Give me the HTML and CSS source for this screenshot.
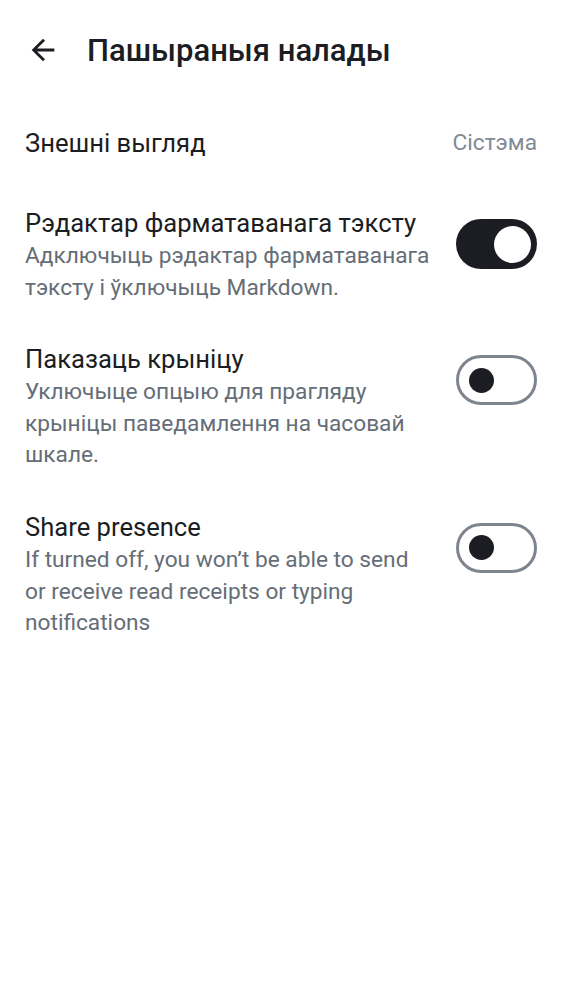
FILE: index.html
```html
<!DOCTYPE html>
<html lang="be">
<head>
<meta charset="utf-8">
<link rel="stylesheet" href="styles.css">
</head>
<body>
<div class="screen">
  <header class="topbar">
    <button class="back" aria-label="Back">
      <svg viewBox="0 0 24 24" width="34" height="34"><path d="M20 11H7.83l5.59-5.59L12 4l-8 8 8 8 1.41-1.41L7.83 13H20v-2z" fill="#1b1d22"/></svg>
    </button>
    <h1 class="title">Пашыраныя налады</h1>
  </header>
  <div class="row row-first">
    <div class="label">Знешні выгляд</div>
    <div class="value">Сістэма</div>
  </div>
  <div class="row">
    <div class="text">
      <div class="label">Рэдактар фарматаванага тэксту</div>
      <div class="desc">Адключыць рэдактар фарматаванага тэксту і ўключыць Markdown.</div>
    </div>
    <div class="switch on"><span class="thumb"></span></div>
  </div>
  <div class="row">
    <div class="text">
      <div class="label">Паказаць крыніцу</div>
      <div class="desc">Уключыце опцыю для прагляду крыніцы паведамлення на часовай шкале.</div>
    </div>
    <div class="switch"><span class="thumb"></span></div>
  </div>
  <div class="row">
    <div class="text">
      <div class="label">Share presence</div>
      <div class="desc">If turned off, you won’t be able to send or receive read receipts or typing notifications</div>
    </div>
    <div class="switch"><span class="thumb"></span></div>
  </div>
</div>
</body>
</html>
```
FILE: styles.css
```css
html, body {
  margin: 0;
  padding: 0;
  background: #ffffff;
}
body {
  font-family: Roboto, "Noto Sans", sans-serif;
  color: #1b1d22;
}
.screen {
  width: 562px;
  min-height: 1000px;
}
.topbar {
  height: 100px;
  display: flex;
  align-items: center;
  padding-left: 26px;
}
.back {
  border: 0;
  background: none;
  padding: 0;
  width: 34px;
  height: 34px;
  display: flex;
}
.title {
  margin: 0 0 0 27px;
  font-size: 31px;
  font-weight: 500;
  letter-spacing: 0;
  color: #1b1d22;
}
.row {
  display: flex;
  align-items: flex-start;
  padding: 19px 25px 20px 25px;
  gap: 24px;
}
.row-first {
  align-items: center;
  justify-content: space-between;
  padding-top: 26px;
  padding-bottom: 27px;
}
.text {
  flex: 1;
  min-width: 0;
}
.label {
  font-size: 25.6px;
  line-height: 34px;
  color: #1b1d22;
}
.value {
  font-size: 22.7px;
  line-height: 34px;
  color: #818a95;
}
.desc {
  font-size: 22.7px;
  line-height: 31.6px;
  color: #656d77;
}
.switch {
  flex: none;
  box-sizing: border-box;
  width: 81px;
  height: 50px;
  margin-top: 13px;
  border-radius: 25px;
  border: 3px solid #7e858f;
  background: #ffffff;
  position: relative;
}
.switch .thumb {
  position: absolute;
  width: 25px;
  height: 25px;
  border-radius: 50%;
  background: #1b1d22;
  left: 10px;
  top: 9.5px;
}
.switch.on {
  background: #1b1d22;
  border-color: #1b1d22;
}
.switch.on .thumb {
  width: 37px;
  height: 37px;
  background: #ffffff;
  left: 35px;
  top: 3.5px;
}
```
